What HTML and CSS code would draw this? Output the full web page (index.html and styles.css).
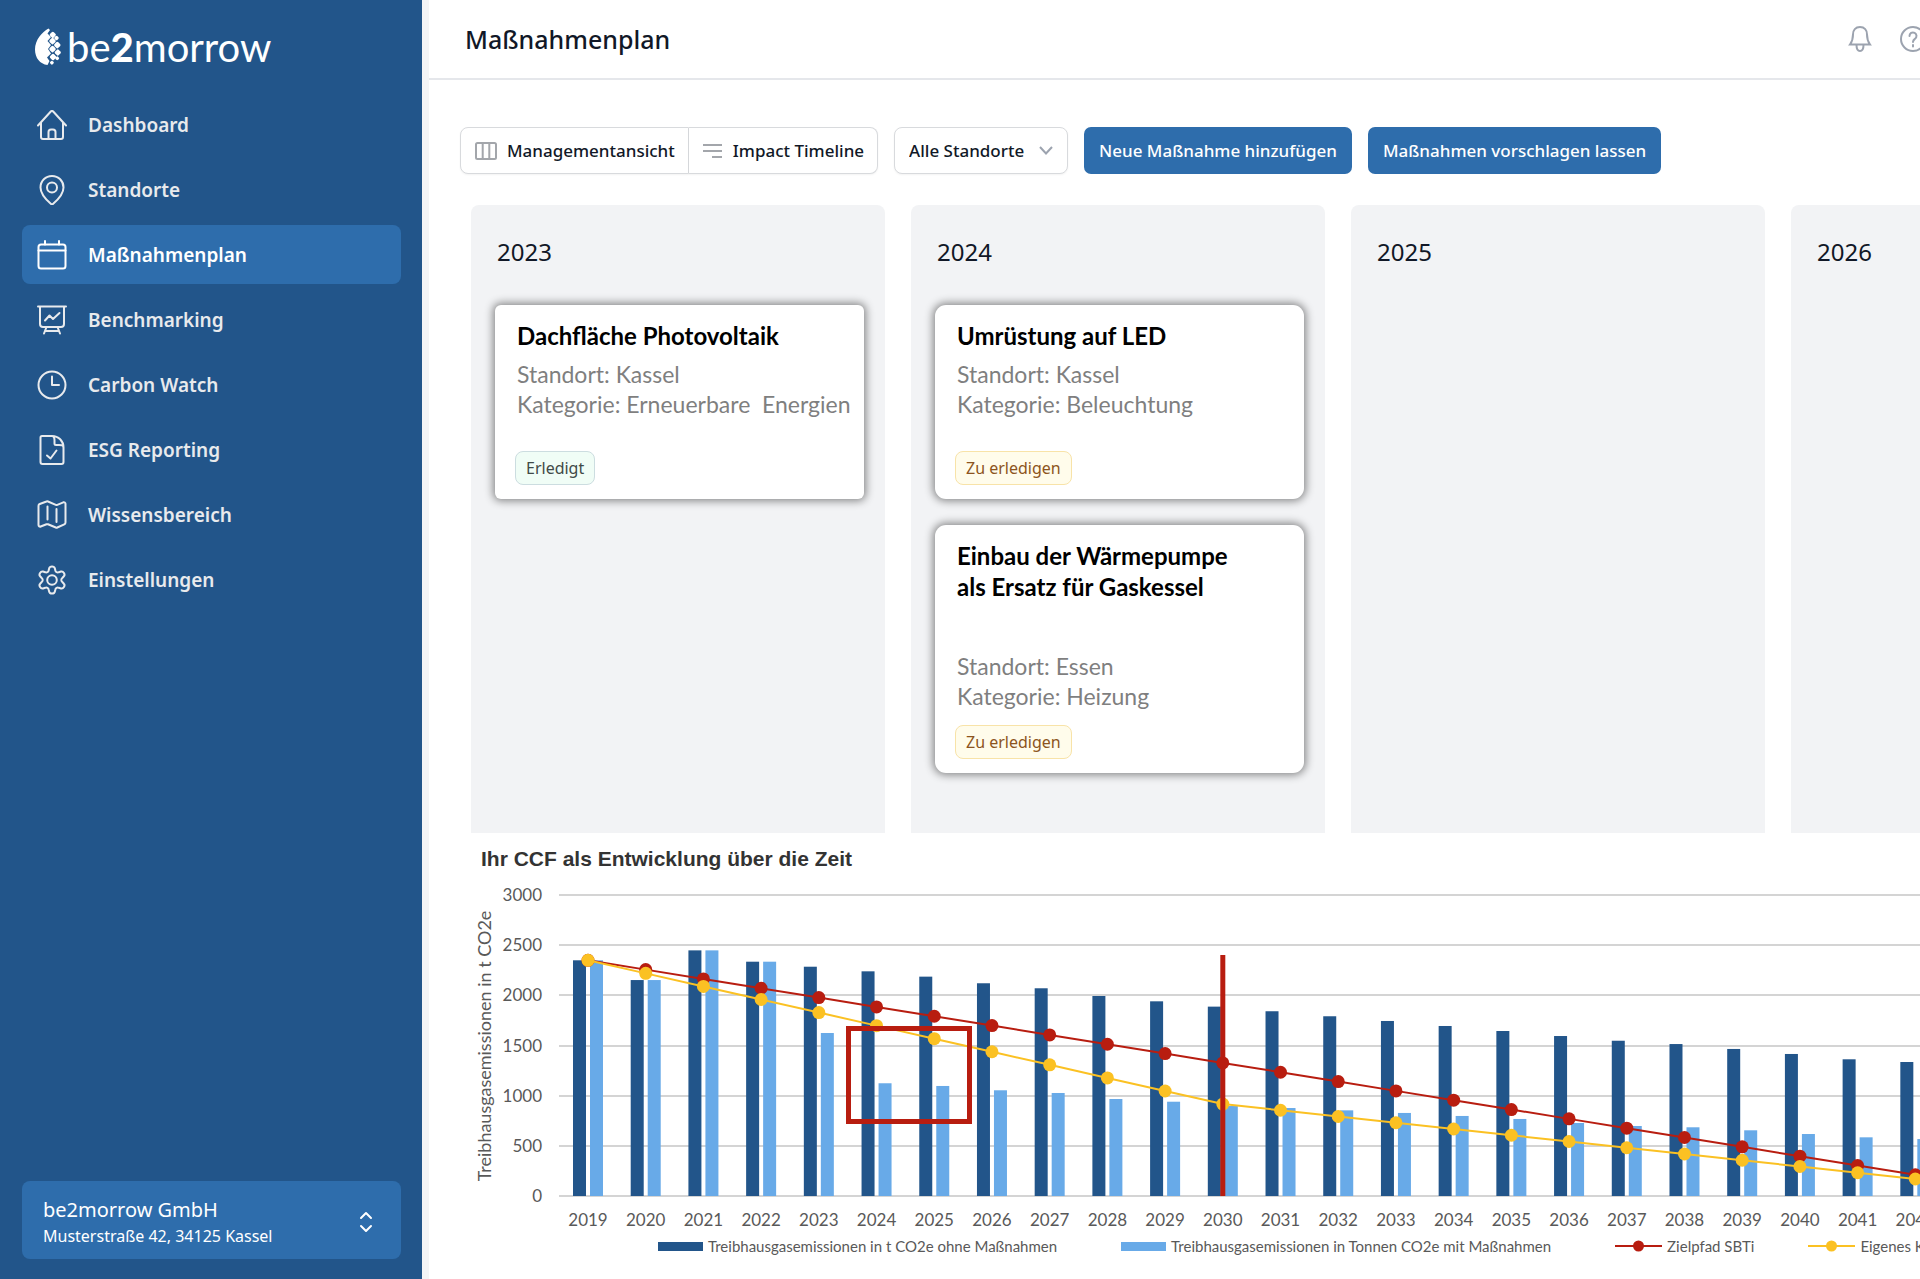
FILE: index.html
```html
<!DOCTYPE html>
<html lang="de">
<head>
<meta charset="utf-8">
<meta name="viewport" content="width=device-width, initial-scale=1">
<title>Maßnahmenplan – be2morrow</title>
<link rel="stylesheet" href="styles.css">
</head>
<body>
<div class="app">
  <aside class="sidebar">
    <a class="logo" href="#">
      <svg class="logo-mark" width="28" height="38" viewBox="0 0 28 38" aria-hidden="true">
        <path d="M14.500 0.500C8 4 1 12 1 21.500 1 30 6 36 13.500 37L15.500 33 13 29.500 17 25.500 14 21 17 17 13.500 13 17 9 13.500 5.500 16 2Z" fill="#fff"/>
        <g fill="#fff">
          <rect x="16.200" y="4.200" width="5.200" height="5.200" rx="1.500" transform="rotate(45 18.800 6.800)"/>
          <rect x="15.800" y="10.400" width="5.400" height="5.400" rx="1.500" transform="rotate(45 18.500 13.100)"/>
          <rect x="20.500" y="8" width="4" height="4" rx="1.500" transform="rotate(45 22.500 10)"/>
          <rect x="20.600" y="14.400" width="5.400" height="5.400" rx="1.500" transform="rotate(45 23.300 17.100)"/>
          <rect x="15.800" y="18.400" width="5.400" height="5.400" rx="1.500" transform="rotate(45 18.500 21.100)"/>
          <rect x="21.200" y="21.900" width="5.200" height="5.200" rx="1.500" transform="rotate(45 23.800 24.500)"/>
          <rect x="16.300" y="26.300" width="5.400" height="5.400" rx="1.500" transform="rotate(45 19 29)"/>
          <rect x="21.500" y="28.600" width="3.400" height="3.400" rx="1.200" transform="rotate(45 23.200 30.300)"/>
          <rect x="16.200" y="33" width="3.400" height="3.400" rx="1.200" transform="rotate(45 17.900 34.700)"/>
        </g>
      </svg>
      <span class="logo-text">be<b>2</b>morrow</span>
    </a>
    <nav class="nav" aria-label="Hauptnavigation">
      <a class="nav-item" href="#">
        <svg class="icon" viewBox="0 0 30 30"><path d="M1 15.500 13.800 1.500a1.600 1.600 0 0 1 2.400 0L29 15.500M4 12.500V27a2 2 0 0 0 2 2h18a2 2 0 0 0 2-2V12.500M11.500 29v-7a2.500 2.500 0 0 1 2.500-2.500h2a2.500 2.500 0 0 1 2.500 2.500v7"/></svg>
        <span>Dashboard</span></a>
      <a class="nav-item" href="#">
        <svg class="icon" viewBox="0 0 30 30"><circle cx="15" cy="12.500" r="5"/><path d="M15 1c6.500 0 11.500 5 11.500 11.500C26.500 19 20 25.500 16.200 28.800a1.800 1.800 0 0 1-2.400 0C10 25.500 3.500 19 3.500 12.500 3.500 6 8.500 1 15 1Z"/></svg>
        <span>Standorte</span></a>
      <a class="nav-item nav-item-active" href="#" aria-current="page">
        <svg class="icon" viewBox="0 0 30 30"><rect x="1.500" y="4.500" width="27" height="24" rx="2.500"/><path d="M1.500 10.500h27M8 1v3.500M22 1v3.500"/></svg>
        <span>Maßnahmenplan</span></a>
      <a class="nav-item" href="#">
        <svg class="icon" viewBox="0 0 30 30"><path d="M1 1.500h28M3 1.500V19a3 3 0 0 0 3 3h18a3 3 0 0 0 3-3V1.500M9.500 22 7 28.500M20.500 22 23 28.500M8.500 26h13M8 15.500l4.500-5 3.500 3.500 6.500-6"/></svg>
        <span>Benchmarking</span></a>
      <a class="nav-item" href="#">
        <svg class="icon" viewBox="0 0 30 30"><circle cx="15" cy="15" r="13.500"/><path d="M15 6.500V15h7"/></svg>
        <span>Carbon Watch</span></a>
      <a class="nav-item" href="#">
        <svg class="icon" viewBox="0 0 30 30"><path d="M3.500 2.500A1.500 1.500 0 0 1 5 1h10c6.500 0 11.500 5 11.500 11.500V27a2 2 0 0 1-2 2h-19a2 2 0 0 1-2-2ZM15 1c2.500 0 2.500 2 2.500 4.500v3a1.500 1.500 0 0 0 1.500 1.500h3c2.500 0 4.500 0 4.500 3M10 20.500l3.500 3 6-8"/></svg>
        <span>ESG Reporting</span></a>
      <a class="nav-item" href="#">
        <svg class="icon" viewBox="0 0 30 30"><path d="M1.500 5.800a2 2 0 0 1 1.200-1.800L9.500 1.500a2 2 0 0 1 1.500 0l7.800 3.400a2 2 0 0 0 1.500 0l6-2.600a1.600 1.600 0 0 1 2.200 1.500V22.500a2 2 0 0 1-1.200 1.800L20.300 27.500a2 2 0 0 1-1.500 0L11 24.300a2 2 0 0 0-1.500 0L3.700 26.500a1.600 1.600 0 0 1-2.200-1.500ZM10.500 6.500v13M19.500 9v13"/></svg>
        <span>Wissensbereich</span></a>
      <a class="nav-item" href="#">
        <svg class="icon" viewBox="0 0 30 30"><circle cx="15" cy="15" r="4.800"/><path d="M12.200 3.200C12.800.8 17.200.8 17.800 3.200L18.300 5.300A2.500 2.500 0 0 0 21.800 7.200L24 6.500C26.300 5.800 28.600 9.600 26.900 11.300L25.300 13A2.500 2.500 0 0 0 25.300 17L26.900 18.700C28.600 20.400 26.300 24.200 24 23.500L21.800 22.800A2.500 2.500 0 0 0 18.300 24.700L17.800 26.800C17.200 29.200 12.800 29.200 12.200 26.800L11.700 24.700A2.500 2.500 0 0 0 8.200 22.800L6 23.500C3.700 24.200 1.400 20.400 3.100 18.700L4.700 17A2.500 2.500 0 0 0 4.700 13L3.100 11.300C1.400 9.600 3.700 5.800 6 6.500L8.200 7.200A2.500 2.500 0 0 0 11.700 5.300Z"/></svg>
        <span>Einstellungen</span></a>
    </nav>
    <button class="account" type="button">
      <span class="account-text">
        <span class="account-name">be2morrow GmbH</span>
        <span class="account-address">Musterstraße 42, 34125 Kassel</span>
      </span>
      <svg class="account-arrows" width="14" height="22" viewBox="0 0 14 22" aria-hidden="true"><path d="M2 7l5-5 5 5M2 15l5 5 5-5"/></svg>
    </button>
  </aside>

  <main class="main">
    <header class="topbar">
      <h1 class="page-title">Maßnahmenplan</h1>
      <div class="topbar-actions">
        <button class="icon-button" type="button" aria-label="Benachrichtigungen">
          <svg width="26" height="26" viewBox="0 0 26 26"><path d="M13 1c4.500 0 7 3.200 7 7.500 0 5 .8 7 3 10H3c2.200-3 3-5 3-10C6 4.200 8.500 1 13 1ZM9.500 19c0 4 1.500 6 3.500 6s3.500-2 3.500-6"/></svg>
        </button>
        <button class="icon-button" type="button" aria-label="Hilfe">
          <svg width="26" height="26" viewBox="0 0 26 26"><circle cx="13" cy="13" r="12"/><path d="M9.500 10a3.500 3.500 0 1 1 5.500 2.800c-1.300 1-2 1.500-2 3.200M13 19v1.500"/></svg>
        </button>
      </div>
    </header>

    <div class="toolbar">
      <div class="segmented" role="group" aria-label="Ansicht">
        <button class="segment" type="button">
          <svg width="22" height="18" viewBox="0 0 22 18" aria-hidden="true"><rect x="1" y="1" width="20" height="16" rx="1.500"/><path d="M7.700 1v16M14.300 1v16"/></svg>
          Managementansicht</button>
        <button class="segment" type="button">
          <svg width="20" height="16" viewBox="0 0 20 16" aria-hidden="true"><path d="M0 2h19M0 8h19M9 14h10"/></svg>
          Impact Timeline</button>
      </div>
      <div class="select">
        <select aria-label="Standort"><option>Alle Standorte</option><option>Kassel</option><option>Essen</option></select>
        <svg class="select-arrow" width="14" height="9" viewBox="0 0 14 9" aria-hidden="true"><path d="M1 1l6 6.500L13 1"/></svg>
      </div>
      <button class="button" type="button">Neue Maßnahme hinzufügen</button>
      <button class="button" type="button">Maßnahmen vorschlagen lassen</button>
    </div>

    <section class="board" aria-label="Maßnahmen nach Jahr">
      <section class="column">
        <h2 class="column-title">2023</h2>
        <article class="card">
          <h3 class="card-title">Dachfläche Photovoltaik</h3>
          <p class="card-meta">Standort: Kassel<br>Kategorie: Erneuerbare&nbsp; Energien</p>
          <span class="badge badge-done">Erledigt</span>
        </article>
      </section>
      <section class="column">
        <h2 class="column-title">2024</h2>
        <article class="card card-round">
          <h3 class="card-title">Umrüstung auf LED</h3>
          <p class="card-meta">Standort: Kassel<br>Kategorie: Beleuchtung</p>
          <span class="badge badge-open">Zu erledigen</span>
        </article>
        <article class="card card-round card-large">
          <h3 class="card-title">Einbau der Wärmepumpe<br>als Ersatz für Gaskessel</h3>
          <p class="card-meta">Standort: Essen<br>Kategorie: Heizung</p>
          <span class="badge badge-open">Zu erledigen</span>
        </article>
      </section>
      <section class="column"><h2 class="column-title">2025</h2></section>
      <section class="column"><h2 class="column-title">2026</h2></section>
    </section>

    <section class="chart">
      <h2 class="chart-title">Ihr CCF als Entwicklung über die Zeit</h2>
      <svg class="chart-plot" id="chart" role="img" aria-label="Treibhausgasemissionen pro Jahr"></svg>
      <ul class="legend">
        <li class="legend-bar"><span class="swatch swatch-dark"></span>Treibhausgasemissionen in t CO2e ohne Maßnahmen</li>
        <li class="legend-bar"><span class="swatch swatch-light"></span>Treibhausgasemissionen in Tonnen CO2e mit Maßnahmen</li>
        <li><svg class="line-red" width="47" height="14" viewBox="0 0 47 14" aria-hidden="true"><path d="M0 7h47"/><circle cx="23.500" cy="7" r="4.500"/></svg>Zielpfad SBTi</li>
        <li><svg class="line-yellow" width="47" height="14" viewBox="0 0 47 14" aria-hidden="true"><path d="M0 7h47"/><circle cx="23.500" cy="7" r="4.500"/></svg>Eigenes Klimaziel</li>
      </ul>
    </section>
  </main>
</div>
<script src="chart.js"></script>
</body>
</html>
```

FILE: styles.css
```css
* { box-sizing: border-box; }

body {
  margin: 0;
  background: #fff;
  color: #111827;
  font-family: "Noto Sans", "Open Sans", sans-serif;
}

h1, h2, h3, p, ul { margin: 0; padding: 0; }
button, select { font: inherit; color: inherit; cursor: pointer; }
a { color: inherit; text-decoration: none; }
svg { fill: none; flex: none; }

.app {
  display: flex;
  min-height: 100vh;
}

/* Sidebar */
.sidebar {
  position: sticky;
  top: 0;
  display: flex;
  flex: 0 0 422px;
  flex-direction: column;
  height: 100vh;
  padding: 23px 21px 20px 22px;
  background: #22558a;
  color: #fff;
}

.logo {
  display: flex;
  align-items: center;
  gap: 5px;
  height: 48px;
  margin-bottom: 24px;
  padding-left: 12px;
}

.logo-text {
  font-family: Lato, sans-serif;
  font-size: 40px;
  line-height: 48px;
}

.logo-text b { font-weight: 900; }

.nav {
  display: flex;
  flex-direction: column;
  gap: 6px;
}

.nav-item {
  display: flex;
  align-items: center;
  gap: 21px;
  height: 59px;
  padding-left: 15px;
  border-radius: 8px;
  color: #e8eaed;
  font-size: 19px;
  font-weight: 600;
}

.nav-item-active {
  background: #2e6dac;
  color: #fff;
}

.icon {
  width: 30px;
  height: 30px;
  stroke: currentColor;
  stroke-width: 2;
  stroke-linecap: round;
  stroke-linejoin: round;
}

.account {
  display: flex;
  align-items: center;
  justify-content: space-between;
  margin-top: auto;
  padding: 14px 28px 10px 21px;
  border: 0;
  border-radius: 8px;
  background: #2e6dac;
  color: #fff;
  text-align: left;
}

.account-text { display: grid; }
.account-name { font-size: 20px; line-height: 29px; }
.account-address { font-size: 16px; line-height: 25px; }

.account-arrows {
  stroke: #fff;
  stroke-width: 2;
  stroke-linecap: round;
  stroke-linejoin: round;
}

/* Main area */
.main {
  flex: 1;
  min-width: 0;
  overflow: hidden;
  border-left: 7px solid #f3f4f6;
}

.topbar {
  display: flex;
  align-items: center;
  justify-content: space-between;
  height: 80px;
  padding-left: 36px;
  border-bottom: 2px solid #e5e7eb;
}

.page-title {
  font-size: 25px;
  font-weight: 500;
  line-height: 36px;
}

.topbar-actions {
  display: flex;
  gap: 27px;
  margin-right: -6px;
}

.icon-button {
  display: flex;
  padding: 0;
  border: 0;
  background: none;
  stroke: #9ca3af;
  stroke-width: 2;
  stroke-linecap: round;
}

.toolbar {
  display: flex;
  gap: 16px;
  margin-top: 47px;
  padding-left: 31px;
  font-size: 17px;
  font-weight: 500;
}

.segmented { display: flex; }

.segment {
  display: flex;
  align-items: center;
  gap: 10px;
  height: 47px;
  padding: 0 13px 0 14px;
  border: 1px solid #d8dadd;
  border-radius: 8px 0 0 8px;
  background: #fff;
  box-shadow: 0 1px 2px #0000000d;
  white-space: nowrap;
}

.segment + .segment {
  border-left: 0;
  border-radius: 0 8px 8px 0;
}

.segment svg { stroke: #a3a6ab; stroke-width: 2; }

.select {
  display: grid;
  align-items: center;
  width: 174px;
}

.select select {
  grid-area: 1 / 1;
  height: 47px;
  padding: 0 14px;
  border: 1px solid #d8dadd;
  border-radius: 8px;
  background: #fff;
  box-shadow: 0 1px 2px #0000000d;
  appearance: none;
}

.select-arrow {
  grid-area: 1 / 1;
  justify-self: end;
  margin-right: 15px;
  stroke: #9ca3af;
  stroke-width: 2;
  pointer-events: none;
}

.button {
  height: 47px;
  padding: 0 15px;
  border: 0;
  border-radius: 7px;
  background: #2e6dac;
  color: #fff;
  white-space: nowrap;
}

/* Board */
.board {
  display: flex;
  gap: 26px;
  margin-top: 31px;
  padding-left: 42px;
}

.column {
  display: flex;
  flex: 0 0 414px;
  flex-direction: column;
  gap: 26px;
  min-height: 628px;
  padding: 30px 21px 60px 24px;
  border-radius: 8px 8px 0 0;
  background: #f2f3f5;
}

.column-title {
  margin-bottom: 10px;
  padding-left: 2px;
  font-size: 24px;
  font-weight: 400;
  line-height: 34px;
}

.card {
  display: flex;
  flex-direction: column;
  align-items: flex-start;
  height: 194px;
  padding: 15px 0 14px 22px;
  border-radius: 6px;
  background: #fff;
  box-shadow: 0 0 8px 2px #00000073;
  font-family: Lato, sans-serif;
}

.card-round { border-radius: 11px; }
.card-large { height: 248px; }

.card-title {
  color: #000;
  font-size: 24px;
  font-weight: 700;
  line-height: 31px;
}

.card-meta {
  margin-top: 8px;
  color: #7f7f7f;
  font-size: 23px;
  line-height: 30px;
  white-space: nowrap;
}

.card-large .card-meta { margin-top: 49px; }

.badge {
  margin-top: auto;
  margin-left: -2px;
  padding: 0 10px;
  border: 1px solid;
  border-radius: 8px;
  font-family: "Noto Sans", sans-serif;
  font-size: 16px;
  line-height: 32px;
}

.badge-done { border-color: #ccdde0; background: #f0fdf6; color: #404a48; }
.badge-open { border-color: #f8e3a8; background: #fffceb; color: #8c5420; }

/* Chart */
.chart {
  margin-top: 12px;
  padding-left: 42px;
  color: #595959;
  font-family: Lato, sans-serif;
}

.chart-title {
  padding-left: 10px;
  color: #333;
  font-family: "Liberation Sans", sans-serif;
  font-size: 21px;
  font-weight: 700;
  line-height: 28px;
}

.chart-plot {
  display: block;
  width: 100%;
  height: 354px;
  margin-top: 7px;
}

.chart-plot text { fill: #595959; font-size: 17px; }
.chart-plot .tick-y { text-anchor: end; }
.chart-plot .tick-x, .chart-plot .axis-title { text-anchor: middle; }
.chart-plot .axis-title { font-size: 18px; }
.grid-line { stroke: #d4d4d4; stroke-width: 2; }
.bar-dark { fill: #22558a; }
.bar-light { fill: #68aae8; }
.path-red { stroke: #b81d10; stroke-width: 2; }
.path-yellow { stroke: #fbc123; stroke-width: 2; }
.dot-red { fill: #b81d10; }
.dot-yellow { fill: #fbc123; }
.marker { stroke: #b81d10; stroke-width: 5; }

.legend {
  display: flex;
  gap: 54px;
  padding-left: 187px;
  font-size: 15px;
  line-height: 24px;
  list-style: none;
  white-space: nowrap;
}

.legend li { display: flex; flex: none; align-items: center; gap: 5px; }
.legend .legend-bar { padding-right: 10px; }
.swatch { width: 45px; height: 9px; }
.swatch-dark { background: #22558a; }
.swatch-light { background: #68aae8; }
.line-red { fill: #b81d10; stroke: #b81d10; stroke-width: 2; }
.line-yellow { fill: #fbc123; stroke: #fbc123; stroke-width: 2; }
```

FILE: chart.js
```js
const svg = document.getElementById("chart");
const SVG_NS = "http://www.w3.org/2000/svg";

const FIRST_YEAR = 2019;
const without = [2350, 2153, 2449, 2336, 2286, 2240, 2187, 2121, 2071, 1994, 1941, 1888,
  1842, 1792, 1745, 1695, 1645, 1595, 1548, 1515, 1466, 1416, 1363, 1336];
const withMeasures = [2350, 2153, 2449, 2336, 1625, 1124, 1097, 1054, 1027, 967, 940, 897,
  877, 854, 828, 798, 768, 728, 698, 685, 655, 618, 585, 568];
const target = without.map((_, i) => 2350 - 93 * i);
const ownGoal = without.map((_, i) => (i <= 11 ? 2350 - 130.3 * i : 917 - 62.3 * (i - 11)));

const x = (i) => 117 + i * 57.71;
const y = (value) => 316 - value * 0.1003;

function add(name, attributes, text) {
  const node = document.createElementNS(SVG_NS, name);
  for (const key in attributes) node.setAttribute(key, attributes[key]);
  if (text !== undefined) node.textContent = text;
  svg.appendChild(node);
}

for (let value = 0; value <= 3000; value += 500) {
  const gy = Math.round(y(value));
  add("line", { class: "grid-line", x1: 88, x2: "100%", y1: gy, y2: gy });
  add("text", { class: "tick-y", x: 71, y: gy + 6 }, value);
}

add("text", { class: "axis-title", transform: "translate(20 166) rotate(-90)" },
  "Treibhausgasemissionen in t CO2e");

without.forEach((value, i) => {
  const height = value * 0.1003;
  const lightHeight = withMeasures[i] * 0.1003;
  add("rect", { class: "bar-dark", x: x(i) - 15, y: 316 - height, width: 13, height });
  add("rect", { class: "bar-light", x: x(i) + 2, y: 316 - lightHeight, width: 13, height: lightHeight });
  add("text", { class: "tick-x", x: x(i), y: 346 }, FIRST_YEAR + i);
});

function drawLine(values, colour) {
  add("polyline", { class: "path-" + colour, points: values.map((v, i) => x(i) + "," + y(v)).join(" ") });
  values.forEach((v, i) => add("circle", { class: "dot-" + colour, cx: x(i), cy: y(v), r: 6.5 }));
}

drawLine(target, "red");
drawLine(ownGoal, "yellow");

add("rect", { class: "marker", x: 377.5, y: 148.5, width: 121, height: 93 });
add("line", { class: "marker", x1: x(11), x2: x(11), y1: 75, y2: 316 });
```
